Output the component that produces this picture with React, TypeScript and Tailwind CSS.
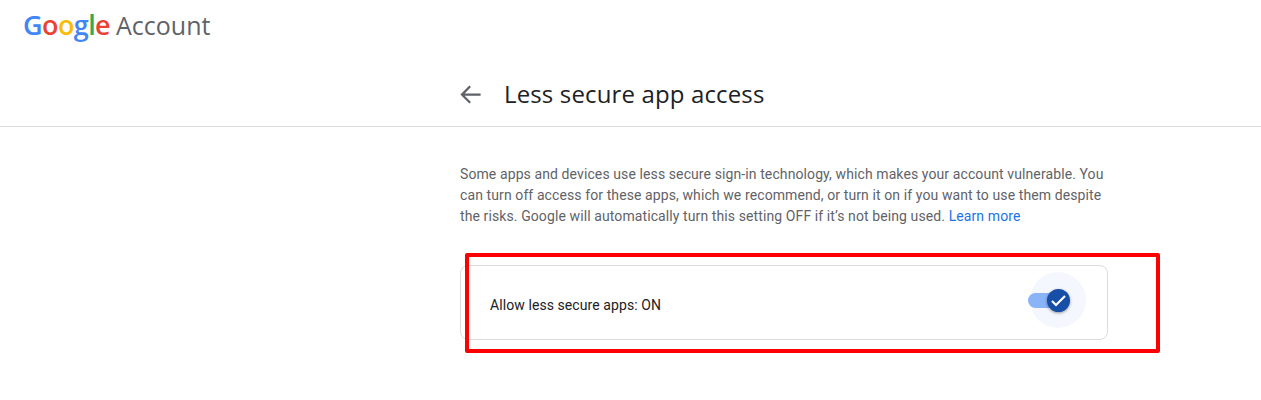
import React from 'react';

const GoogleLogo: React.FC = () => (
    <div className="flex items-baseline text-[27px] leading-[32px] tracking-[-0.6px] font-[550] font-['Open_Sans',sans-serif]">
        <span className="text-[#4285f4]">G</span>
        <span className="text-[#ea4335]">o</span>
        <span className="text-[#fbbc05]">o</span>
        <span className="text-[#4285f4]">g</span>
        <span className="text-[#34a853]">l</span>
        <span className="text-[#ea4335]">e</span>
        <span className="ml-[6px] text-[#5f6368] text-[25px] tracking-normal font-normal">Account</span>
    </div>
);

const Toggle: React.FC = () => (
    <div className="w-[56px] h-[56px] mb-[5px] rounded-full bg-[#f4f8fe] flex items-center">
        <div className="relative w-[34px] h-[15px] rounded-full bg-[#8ab4f8] -ml-[2px]">
            <div className="absolute left-[19px] -top-[4px] w-[23px] h-[23px] rounded-full bg-[#174ea6] shadow-[0_1px_3px_rgba(0,0,0,0.4)] flex items-center justify-center">
                <svg width="19" height="19" viewBox="0 0 19 19" fill="none">
                    <path d="M3 10 L7 14 L16 5" stroke="#ffffff" strokeWidth="2.2" />
                </svg>
            </div>
        </div>
    </div>
);

export default function App() {
    return (
        <div className="relative w-[1261px] h-[400px] bg-white overflow-hidden font-['Roboto',sans-serif]">
            {/* Header */}
            <div className="h-[127px] border-b border-[#dadce0]">
                <div className="h-[50px] pl-[23px] flex items-center">
                    <GoogleLogo />
                </div>
                <div className="pl-[457px] pt-[28px] flex items-center">
                    <svg width="27" height="27" viewBox="0 0 24 24" fill="#5f6368">
                        <path d="M21 11H6.83l5.59-5.59L11 4l-8 8 8 8 1.41-1.41L6.83 13H21z" />
                    </svg>
                    <h1 className="ml-[20px] text-[24px] leading-[32px] tracking-[0.14px] text-[#202124] font-['Open_Sans',sans-serif]">Less secure app access</h1>
                </div>
            </div>

            {/* Content */}
            <div className="pl-[460px] pt-[37px] w-[1108px]">
                <p className="text-[14px] leading-[21px] tracking-[0.1px] text-[#5f6368] box-content w-[648px]">
                    Some apps and devices use less secure sign-in technology, which makes your account vulnerable. You can turn off access for these apps, which we recommend, or turn it on if you want to use them despite the risks. Google will automatically turn this setting OFF if it’s not being used. <span className="text-[#1a73e8]">Learn more</span>
                </p>
                <div className="mt-[38px] h-[75px] border border-[#dadce0] rounded-[8px] flex items-center justify-between pl-[29px] pr-[21px]">
                    <span className="mt-[5px] text-[14px] tracking-[0.08px] text-[#202124]">Allow less secure apps: ON</span>
                    <Toggle />
                </div>
            </div>

            {/* Red annotation */}
            <div className="absolute left-[465px] top-[253px] w-[695px] h-[100px] border-[4px] border-[#ff0000] rounded-[2px]" />
        </div>
    );
}
